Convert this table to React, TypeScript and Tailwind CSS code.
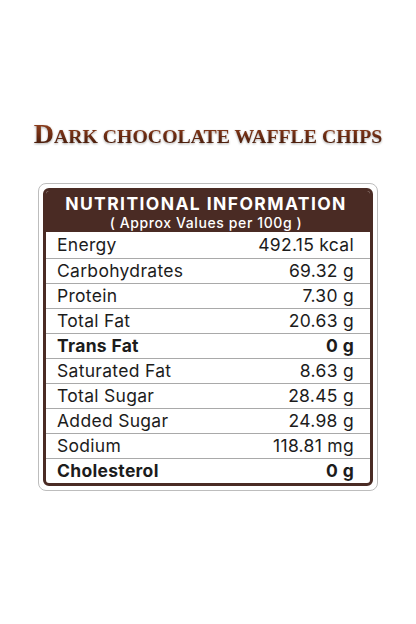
import React from "react";

const rows: { label: string; value: string; bold?: boolean }[] = [
  { label: "Energy", value: "492.15 kcal" },
  { label: "Carbohydrates", value: "69.32 g" },
  { label: "Protein", value: "7.30 g" },
  { label: "Total Fat", value: "20.63 g" },
  { label: "Trans Fat", value: "0 g", bold: true },
  { label: "Saturated Fat", value: "8.63 g" },
  { label: "Total Sugar", value: "28.45 g" },
  { label: "Added Sugar", value: "24.98 g" },
  { label: "Sodium", value: "118.81 mg" },
  { label: "Cholesterol", value: "0 g", bold: true },
];

export default function App() {
  return (
    <div className="flex min-h-[624px] w-[416px] flex-col items-center bg-white pt-[118px] font-['Inter',sans-serif]">
      <h1 className="flex items-baseline bg-gradient-to-b from-[#a04a24] via-[#6e2c12] to-[#2a1208] bg-clip-text font-['Liberation_Serif',serif] font-bold leading-[32px] text-transparent drop-shadow-[0_1px_1px_rgba(0,0,0,0.35)]">
        <span className="text-[28px]">D</span>
        <span className="text-[19.8px]">ARK CHOCOLATE WAFFLE CHIPS</span>
      </h1>

      <div className="mt-[31px] w-[340px] rounded-[8px] border border-[#bdbdbd] p-[4px]">
        <div className="overflow-hidden rounded-[6px] border-[3px] border-[#4a2b24] bg-white">
          <div className="flex h-[41px] flex-col items-center justify-center bg-[#4a2b24] pt-[1px] text-white">
            <div className="pr-[4px] text-[17.5px] font-bold leading-[20px] tracking-[1.4px]">
              NUTRITIONAL INFORMATION
            </div>
            <div className="pr-[4px] text-[14px] font-medium leading-[17px] tracking-[0.6px]">
              ( Approx Values per 100g )
            </div>
          </div>
          {rows.map((r, i) => (
            <div
              key={r.label}
              className={`flex h-[25px] items-center justify-between pl-[11px] pr-[16px] text-[17.5px] tracking-[0.3px] text-[#1c1c1c] ${
                i > 0 ? "border-t border-[#a9a9a9]" : "h-[26px]"
              } ${r.bold ? "font-bold" : "font-normal"}`}
            >
              <span>{r.label}</span>
              <span>{r.value}</span>
            </div>
          ))}
        </div>
      </div>
    </div>
  );
}
